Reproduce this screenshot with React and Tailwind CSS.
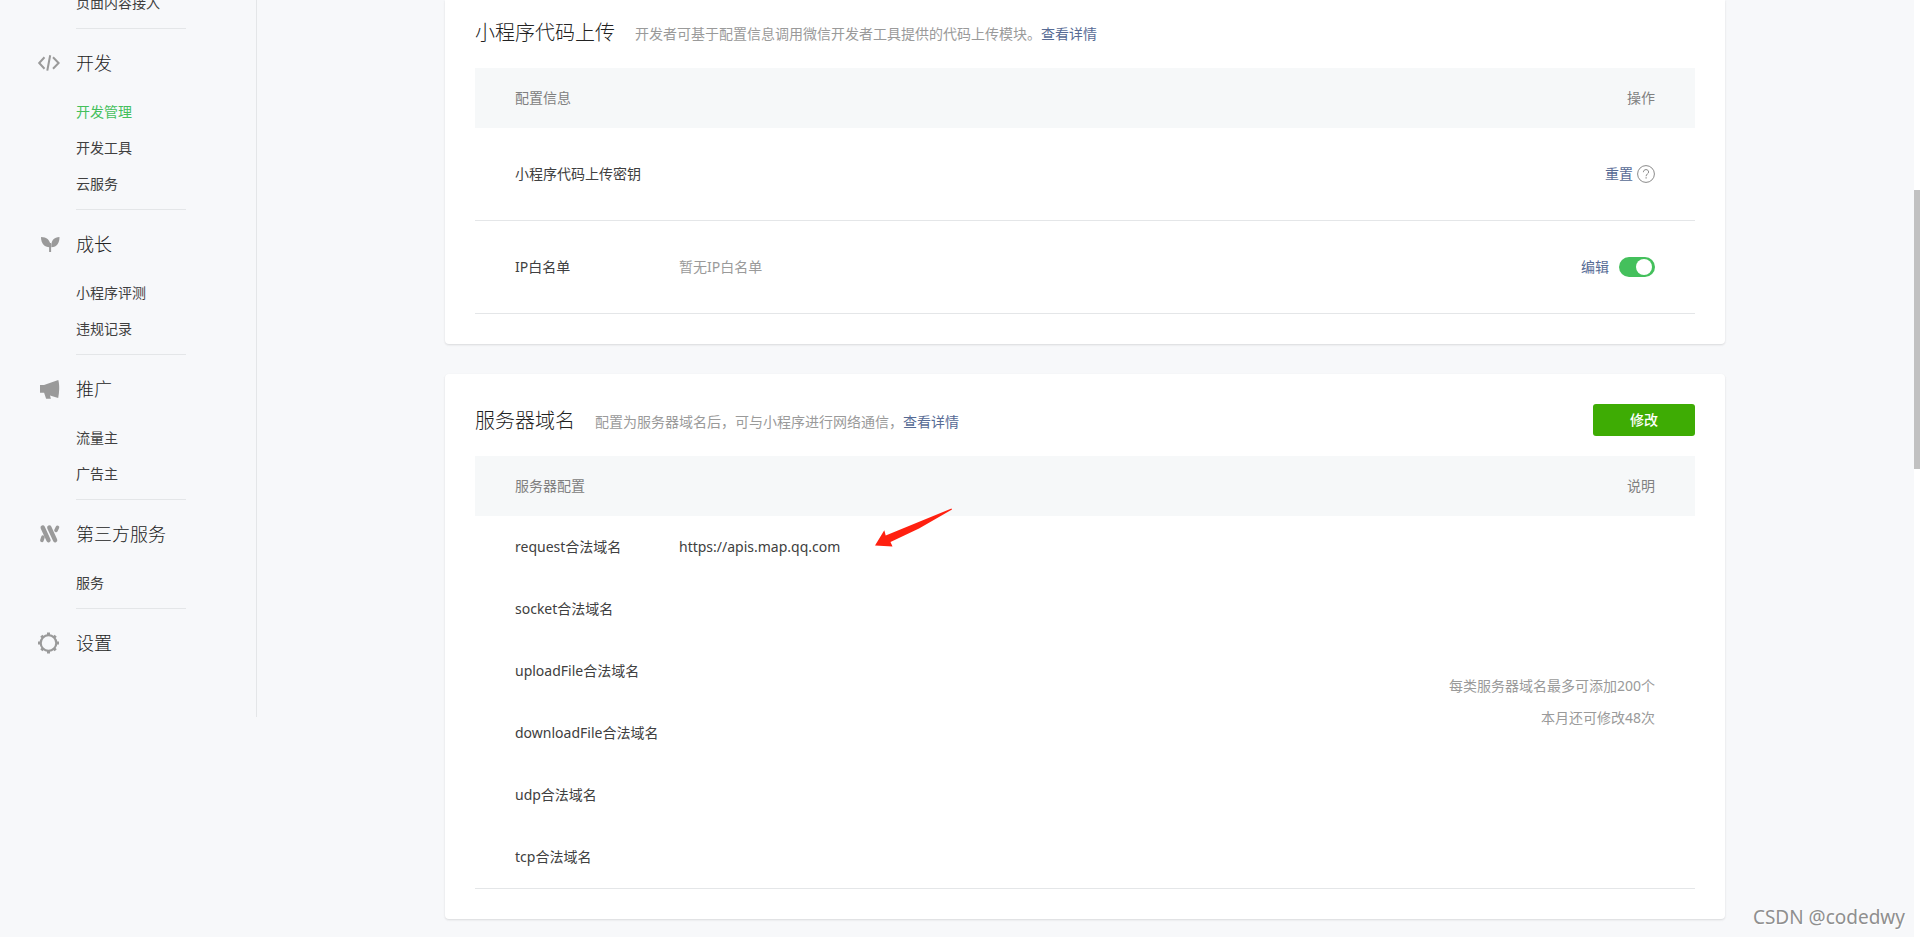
import React from "react";

const menu = [
  {
    title: "开发",
    icon: CodeIcon,
    items: ["开发管理", "开发工具", "云服务"],
  },
  {
    title: "成长",
    icon: SproutIcon,
    items: ["小程序评测", "违规记录"],
  },
  {
    title: "推广",
    icon: MegaphoneIcon,
    items: ["流量主", "广告主"],
  },
  {
    title: "第三方服务",
    icon: ServiceIcon,
    items: ["服务"],
  },
];

const domains = [
  { name: "request合法域名", value: "https://apis.map.qq.com" },
  { name: "socket合法域名", value: "" },
  { name: "uploadFile合法域名", value: "" },
  { name: "downloadFile合法域名", value: "" },
  { name: "udp合法域名", value: "" },
  { name: "tcp合法域名", value: "" },
];

function CodeIcon() {
  return (
    <svg width="24" height="24" viewBox="0 0 24 24" fill="none" stroke="#9a9a9a" strokeWidth="2">
      <path d="M7.5 6.3 2.2 12 7.5 17.7" />
      <path d="M16 6.3 21.6 12 16 17.7" />
      <path d="M13.2 4.2 10.3 19.6" />
    </svg>
  );
}

function SproutIcon() {
  return (
    <svg width="24" height="24" viewBox="0 0 24 24" fill="#9a9a9a">
      <path d="M4 5c5.5 0 9.6 2.6 9.6 10.2C7.5 15.600 4 11.500 4 5z" />
      <path d="M22.500 5c-5.300.3-8.700 3.200-8.200 10.300C20 15 22.500 11 22.500 5z" />
      <path d="M12.100 11h2v9h-2z" />
    </svg>
  );
}

function MegaphoneIcon() {
  return (
    <svg width="24" height="24" viewBox="0 0 24 24" fill="#9a9a9a">
      <path d="M3 8h4l14.300-5c.8 3 1 6 .9 9-.1 3-.4 6-1 9l-8.200-2.600.9 3.400H9.100l-2-6H3z" />
    </svg>
  );
}

function ServiceIcon() {
  return (
    <svg width="24" height="24" viewBox="0 0 24 24" fill="none" stroke="#9a9a9a" strokeWidth="4.4" strokeLinecap="round">
      <path d="M5.700 5.500 11.500 18.200" />
      <path d="M12.300 5.500 18.100 18.200" />
      <path d="M6 15.200 4.900 18.300" strokeWidth="3.600" />
      <path d="M20.500 5.300 19 8.400" strokeWidth="3.600" />
    </svg>
  );
}

function GearIcon() {
  return (
    <svg width="24" height="24" viewBox="0 0 24 24" fill="none" stroke="#9a9a9a">
      <circle cx="11.500" cy="12" r="7.800" strokeWidth="2.200" />
      <path
        d="M11.500 1.500v3M11.500 19.500v3M1 12h3M19 12h3M4.300 4.800l2 2M16.700 17.200l2 2M4.300 19.200l2-2M16.700 6.800l2-2"
        strokeWidth="3"
      />
    </svg>
  );
}

function MenuTitle({ icon: Icon, children }) {
  return (
    <h2 className="flex h-[65px] items-center pt-0.5 pl-[37px] text-lg font-light text-[#222]">
      <span className="w-[39px]">
        <Icon />
      </span>
      {children}
    </h2>
  );
}

function MenuItem({ active, children }) {
  return (
    <li className="h-9 leading-9">
      <a href="#" className={active ? "text-[#44c05c]" : ""}>
        {children}
      </a>
    </li>
  );
}

function Sidebar() {
  return (
    <nav className="h-[717px] w-[257px] shrink-0 overflow-hidden border-r border-[#e4e6e8]">
      {/* tail of the previous group, scrolled past the top edge */}
      <ul className="-mt-[15px] mr-[70px] ml-[76px] border-b border-[#e4e6e8] pb-[7px]">
        <MenuItem>页面内容接入</MenuItem>
      </ul>
      {menu.map((group) => (
        <section key={group.title}>
          <MenuTitle icon={group.icon}>{group.title}</MenuTitle>
          <ul className="mr-[70px] ml-[76px] border-b border-[#e4e6e8] pb-[7px]">
            {group.items.map((item) => (
              <MenuItem key={item} active={item === "开发管理"}>
                {item}
              </MenuItem>
            ))}
          </ul>
        </section>
      ))}
      <MenuTitle icon={GearIcon}>设置</MenuTitle>
    </nav>
  );
}

function CardHeader({ title, desc, action }) {
  return (
    <header className="mb-5 flex h-8 items-center">
      <h3 className="mr-5 pt-0.5 text-xl font-light text-[#222]">{title}</h3>
      <p className="grow pt-1 text-[#9a9a9a]">
        {desc}
        <a href="#" className="text-[#576b95]">
          查看详情
        </a>
      </p>
      {action}
    </header>
  );
}

function TableHead({ left, right }) {
  return (
    <thead>
      <tr className="h-[60px] bg-[#f6f8f9] text-[#808080]">
        <th colSpan={2} className="pl-10 text-left font-normal">
          {left}
        </th>
        <th className="pr-10 text-right font-normal">{right}</th>
      </tr>
    </thead>
  );
}

function UploadCard() {
  return (
    <section className="rounded-b bg-white px-[30px] pt-4 pb-[30px] shadow-[0_1px_2px_rgba(150,150,150,0.3)]">
      <CardHeader
        title="小程序代码上传"
        desc="开发者可基于配置信息调用微信开发者工具提供的代码上传模块。"
      />
      <table className="w-full border-separate border-spacing-0">
        <TableHead left="配置信息" right="操作" />
        <tbody>
          <tr className="h-[93px]">
            <td className="w-[204px] border-b border-[#e4e6e8] pl-10">小程序代码上传密钥</td>
            <td className="border-b border-[#e4e6e8]"></td>
            <td className="border-b border-[#e4e6e8] pr-10">
              <div className="flex items-center justify-end gap-1">
                <a href="#" className="text-[#576b95]">
                  重置
                </a>
                <svg width="18" height="18" viewBox="0 0 18 18" fill="none" stroke="#8a8a8a">
                  <circle cx="9" cy="9" r="8.400" />
                  <path d="M6.400 7.200c0-1.600 1.100-2.600 2.600-2.600s2.600 1 2.600 2.400c0 1.900-2.500 2-2.500 4.200" />
                  <path d="M9.100 12.300v1.300" strokeWidth="1.200" />
                </svg>
              </div>
            </td>
          </tr>
          <tr className="h-[93px]">
            <td className="w-[204px] border-b border-[#e4e6e8] pl-10">IP白名单</td>
            <td className="border-b border-[#e4e6e8] text-[#9a9a9a]">暂无IP白名单</td>
            <td className="border-b border-[#e4e6e8] pr-10">
              <div className="flex items-center justify-end gap-[10px]">
                <a href="#" className="text-[#576b95]">
                  编辑
                </a>
                <label className="relative flex h-5 w-9 items-center justify-end rounded-full bg-[#44c05c] pr-[3px]">
                  <input type="checkbox" defaultChecked aria-label="IP白名单" className="sr-only" />
                  <span className="h-4 w-4 rounded-full bg-white" />
                </label>
              </div>
            </td>
          </tr>
        </tbody>
      </table>
    </section>
  );
}

function DomainCard() {
  return (
    <section className="mt-[30px] rounded bg-white p-[30px] shadow-[0_1px_2px_rgba(150,150,150,0.3)]">
      <CardHeader
        title="服务器域名"
        desc="配置为服务器域名后，可与小程序进行网络通信，"
        action={
          <button className="h-8 w-[102px] rounded-[3px] bg-[#3eac04] font-medium text-white">
            修改
          </button>
        }
      />
      <table className="w-full border-separate border-spacing-0 border-b border-[#e4e6e8]">
        <TableHead left="服务器配置" right="说明" />
        <tbody>
          {domains.map((domain, i) => (
            <tr key={domain.name} className="h-[62px]">
              <td className="w-[204px] pl-10">{domain.name}</td>
              <td>
                {domain.value && (
                  <span className="relative">
                    {domain.value}
                    <RedArrow />
                  </span>
                )}
              </td>
              {i === 0 && (
                <td rowSpan={domains.length} className="pr-10 text-right leading-8 text-[#9a9a9a]">
                  每类服务器域名最多可添加200个
                  <br />
                  本月还可修改48次
                </td>
              )}
            </tr>
          ))}
        </tbody>
      </table>
    </section>
  );
}

function RedArrow() {
  return (
    <svg
      className="absolute bottom-2 left-full ml-[34px]"
      width="80"
      height="40"
      viewBox="0 0 80 40"
      fill="#ff2010"
    >
      <path d="M1 37.500 10.300 22.300 11.700 27.500 77.500.5 78 1.500 45 20.500 16.500 34 18.500 38.500z" />
    </svg>
  );
}

export default function App() {
  return (
    <div className="relative flex min-h-screen overflow-hidden bg-[#f7f8fa] font-['Noto_Sans','Noto_Sans_CJK_SC',sans-serif] text-sm text-[#404040]">
      <Sidebar />
      <main className="grow pr-[189px] pl-[188px]">
        <UploadCard />
        <DomainCard />
      </main>
      <div className="w-1.5 shrink-0 bg-white pt-[190px]">
        <div className="h-[279px] bg-[#c1c1c1]" />
      </div>
      <span className="absolute right-[15px] bottom-1.5 text-[19px] leading-7 text-[#8f8f8f] [text-shadow:1px_1px_0_#fff]">
        CSDN @codedwy
      </span>
    </div>
  );
}
